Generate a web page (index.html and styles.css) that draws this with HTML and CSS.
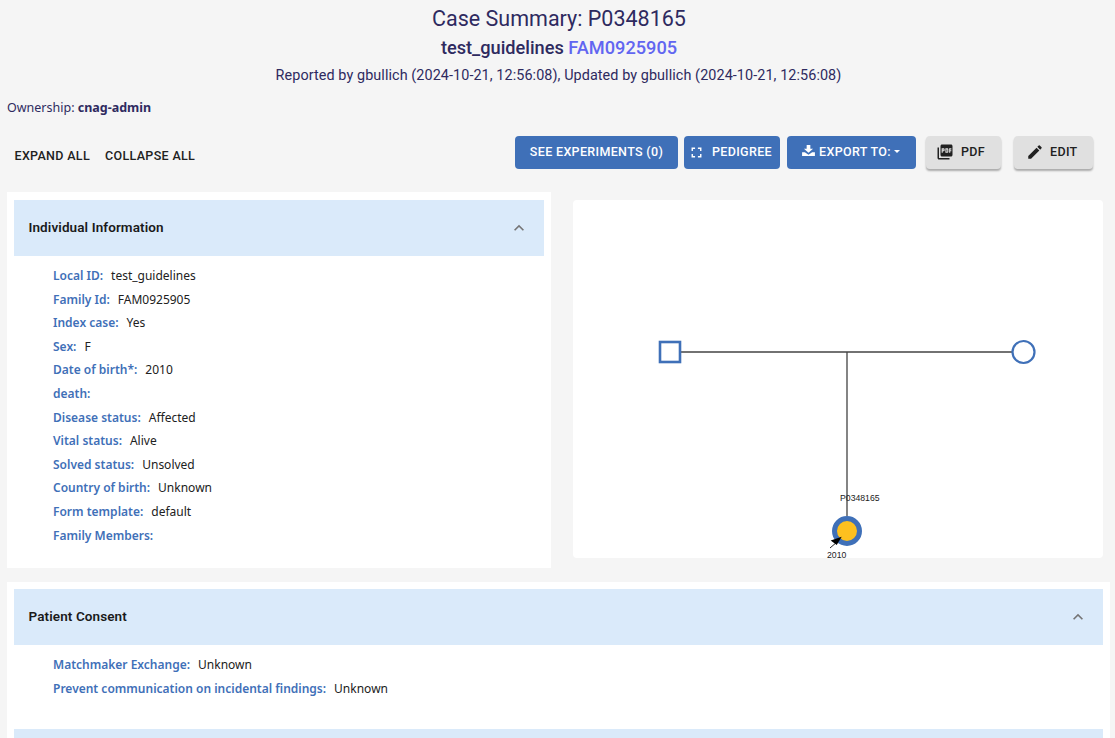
FILE: index.html
```html
<!DOCTYPE html>
<html lang="en">
<head>
<meta charset="utf-8">
<title>Case Summary: P0348165</title>
<link rel="stylesheet" href="styles.css">
</head>
<body>
<header class="head">
  <h1 class="title">Case Summary: P0348165</h1>
  <h2 class="subtitle">test_guidelines <a class="family">FAM0925905</a></h2>
  <p class="reported">Reported by gbullich (2024-10-21, 12:56:08), Updated by gbullich (2024-10-21, 12:56:08)</p>
</header>
<p class="owner">Ownership: <b>cnag-admin</b></p>
<div class="toolbar">
  <div class="group-left">
    <button class="btn-text">EXPAND ALL</button>
    <button class="btn-text">COLLAPSE ALL</button>
  </div>
  <div class="group-right">
    <button class="btn primary exp">SEE EXPERIMENTS (0)</button>
    <button class="btn primary ped">
      <svg class="ic full" viewBox="0 0 24 24"><path fill="#fff" d="M7 14H5v5h5v-2H7v-3zm-2-4h2V7h3V5H5v5zm12 7h-3v2h5v-5h-2v3zM14 5v2h3v3h2V5h-5z"/></svg>
      PEDIGREE
    </button>
    <button class="btn primary export">
      <svg class="ic arrow" viewBox="0 0 14 12"><path fill="#fff" d="M5 0h4v4h3L7 8.500 2 4h3zM0 8h3l4 2.500L11 8h3v4H0z"/></svg>
      EXPORT TO:<span class="caret"></span>
    </button>
    <button class="btn grey pdf">
      <svg class="ic dark" viewBox="0 0 24 24"><path fill="#212121" d="M20 2H8c-1.100 0-2 .9-2 2v12c0 1.100.9 2 2 2h12c1.100 0 2-.9 2-2V4c0-1.100-.9-2-2-2zm-8.500 7.500c0 .83-.67 1.500-1.500 1.500H9v2H7.500V7H10c.83 0 1.500.67 1.500 1.500v1zm5 2c0 .83-.67 1.500-1.500 1.500h-2.500V7H15c.83 0 1.500.67 1.500 1.500v3zm4-3H19v1h1.500V11H19v2h-1.500V7h3v1.500zM9 9.500h1v-1H9v1zM4 6H2v14c0 1.100.9 2 2 2h14v-2H4V6zm10 5.500h1v-3h-1v3z"/></svg>
      PDF
    </button>
    <button class="btn grey edit">
      <svg class="ic dark" viewBox="0 0 24 24"><path fill="#212121" d="M3 17.250V21h3.750L17.810 9.940l-3.750-3.750L3 17.250zM20.710 7.040a1 1 0 0 0 0-1.410l-2.340-2.340a1 1 0 0 0-1.410 0l-1.830 1.830 3.750 3.750 1.830-1.830z"/></svg>
      EDIT
    </button>
  </div>
</div>

<main class="top-row">
  <section class="card info-card">
    <div class="acc-head">
      <span class="acc-title">Individual Information</span>
      <svg class="chev" viewBox="0 0 24 24"><path fill="#757575" d="M12 8l-6 6 1.410 1.410L12 10.830l4.590 4.580L18 14z"/></svg>
    </div>
    <dl class="fields">
      <div class="row"><dt>Local ID:</dt><dd>test_guidelines</dd></div>
      <div class="row"><dt>Family Id:</dt><dd>FAM0925905</dd></div>
      <div class="row"><dt>Index case:</dt><dd>Yes</dd></div>
      <div class="row"><dt>Sex:</dt><dd>F</dd></div>
      <div class="row"><dt>Date of birth*:</dt><dd>2010</dd></div>
      <div class="row"><dt>death:</dt><dd></dd></div>
      <div class="row"><dt>Disease status:</dt><dd>Affected</dd></div>
      <div class="row"><dt>Vital status:</dt><dd>Alive</dd></div>
      <div class="row"><dt>Solved status:</dt><dd>Unsolved</dd></div>
      <div class="row"><dt>Country of birth:</dt><dd>Unknown</dd></div>
      <div class="row"><dt>Form template:</dt><dd>default</dd></div>
      <div class="row"><dt>Family Members:</dt><dd></dd></div>
    </dl>
  </section>
  <section class="pedigree">
    <svg class="ped-svg" viewBox="0 0 530 358">
      <path d="M108 152H440M274 152V316" stroke="#444" stroke-width="1.300" fill="none"/>
      <rect x="87" y="142" width="20" height="20" fill="#fff" stroke="#3f70b8" stroke-width="2.600"/>
      <circle cx="450.500" cy="152" r="11" fill="#fff" stroke="#3f70b8" stroke-width="2.200"/>
      <text class="ped-label" x="267" y="300.500">P0348165</text>
      <circle cx="274" cy="331" r="12.500" fill="#fdc01f" stroke="#3f70b8" stroke-width="5"/>
      <path d="M257 348L264 342" stroke="#222" stroke-width="1"/>
      <path d="M268.700 336.700L257.700 340.500L263.700 345z" fill="#000"/>
      <text class="ped-label" x="254" y="358">2010</text>
    </svg>
  </section>
</main>

<section class="card wide-card">
  <div class="acc-head">
    <span class="acc-title">Patient Consent</span>
    <svg class="chev" viewBox="0 0 24 24"><path fill="#757575" d="M12 8l-6 6 1.410 1.410L12 10.830l4.590 4.580L18 14z"/></svg>
  </div>
  <dl class="fields consent">
    <div class="row"><dt>Matchmaker Exchange:</dt><dd>Unknown</dd></div>
    <div class="row"><dt>Prevent communication on incidental findings:</dt><dd>Unknown</dd></div>
  </dl>
  <div class="acc-head next"></div>
</section>
</body>
</html>
```
FILE: styles.css
```css
* { box-sizing: border-box; }
html, body { margin: 0; padding: 0; height: 738px; overflow: hidden; }
body { background: #f5f5f5; font-family: Roboto, sans-serif; color: #2e2a5f; }

.head { text-align: center; padding-top: 6px; padding-left: 3px; }
.title { margin: 0; font-size: 21.500px; font-weight: 400; line-height: 26px; height: 28px; }
.subtitle { margin: 0; font-size: 18.200px; font-weight: 500; line-height: 28px; height: 27px; }
.family { color: #6266f1; }
.reported { margin: 0; padding-right: 1px; font-size: 14.400px; line-height: 30px; letter-spacing: .08px; }

.owner { margin: 0; padding: 7px 0 0 7px; font-size: 12.500px; line-height: 20px; height: 40px; font-family: "Noto Sans", sans-serif; }
.owner b { font-weight: 700; }

.toolbar { display: flex; justify-content: space-between; align-items: center; height: 34px; margin-top: 4px; padding: 0 22px 0 7px; }
.group-left { display: flex; gap: 0; padding-top: 8px; }
.btn-text { background: none; border: 0; padding: 6px 7.500px; font: 500 12.500px/20px Roboto, sans-serif; color: #212121; letter-spacing: .33px; }
.group-right { display: flex; }
.btn { display: flex; align-items: center; justify-content: flex-start; border: 0; height: 33px; border-radius: 4px; font: 500 12.500px/20px Roboto, sans-serif; letter-spacing: .34px; padding: 0; }
.primary { background: #3f70b8; color: #fff; }
.grey { background: #e0e0e0; color: #212121; box-shadow: 0 2px 2px rgba(0,0,0,.3); }
.exp { width: 163px; justify-content: center; }
.ped { width: 96px; margin-left: 6px; gap: 7.500px; padding-left: 3.500px; }
.export { width: 129px; margin-left: 7px; gap: 4px; padding-left: 15px; }
.pdf { width: 75px; margin-left: 10px; gap: 7px; padding-left: 10px; }
.edit { width: 79px; margin-left: 13px; gap: 6px; padding-left: 12px; }
.ic { flex: none; }
.ic.full { width: 17px; height: 17px; }
.ic.arrow { width: 13px; height: 11px; margin-bottom: 3px; }
.ic.dark { width: 18px; height: 18px; }
.caret { display: inline-block; width: 0; height: 0; margin-left: -.5px; margin-bottom: 2px; border: 3px solid transparent; border-top-color: #fff; border-bottom: 0; }

.top-row { display: flex; align-items: flex-start; margin-top: 23px; padding-left: 7px; }
.card { background: #fff; padding: 8px 7px; }
.info-card { width: 544px; height: 376px; }
.acc-head { display: flex; justify-content: space-between; align-items: center; height: 56px; padding: 0 15px 0 14.500px; background: #daeafa; }
.acc-title { font: 600 13.500px/20px Roboto, sans-serif; letter-spacing: .1px; color: #1a1a1a; margin-bottom: 2px; }
.chev { width: 20px; height: 20px; }
.fields { margin: 0; padding: 8px 0 0 39px; font-family: "Noto Sans", sans-serif; font-size: 12px; }
.row { display: flex; gap: 8px; height: 23.600px; line-height: 23.600px; }
dt { font-weight: 600; font-size: 12px; color: #3f70b8; }
dd { margin: 0; color: #212121; }

.pedigree { width: 530px; height: 358px; margin: 8px 0 0 22px; background: #fff; border-radius: 4px; }
.ped-svg { display: block; width: 530px; height: 358px; overflow: visible; }
.ped-label { font: 8.700px "Liberation Sans", sans-serif; fill: #222; }

.wide-card { width: 1103px; height: 170px; margin: 14px 0 0 7px; padding-top: 7px; }
.consent { height: 84px; }
.next { height: 20px; }
```
